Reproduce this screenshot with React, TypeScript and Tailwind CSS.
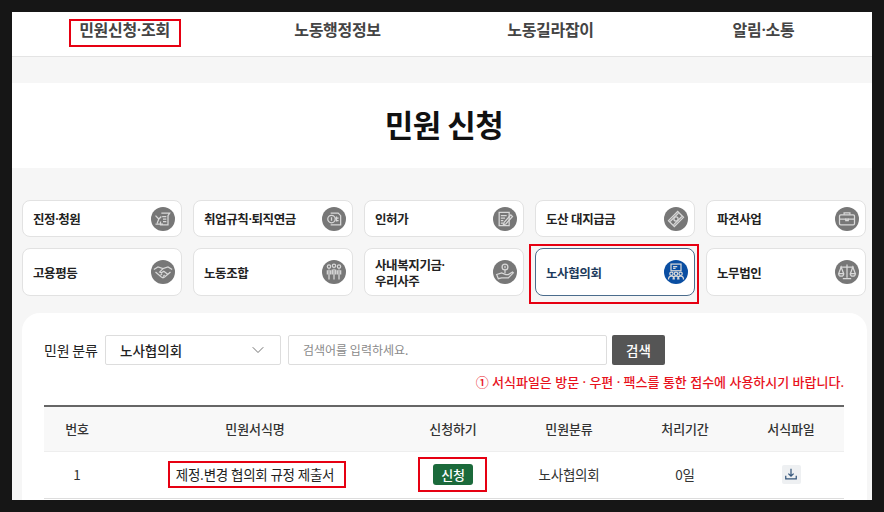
import { ChevronDown } from 'lucide-react';
import type { ReactNode } from 'react';

const font = { fontFamily: '"Noto Sans CJK KR", "Noto Sans", sans-serif' };

const icons: Record<string, ReactNode> = {
    petition: (
        <>
            <path d="M10 5h10l-2 3v11H9v-4" />
            <path d="M3 8l4 4 3-3M7 12l-2 5M3 18h9" />
            <path d="M11 9h5M12 12h4M12 15h4" />
        </>
    ),
    pay: (
        <>
            <path d="M8 5h9l3 3v11H8" />
            <circle cx="9" cy="12" r="4.5" />
            <path d="M9 10v4M15 9v6M17.5 11h-4M17.5 14h-3" />
        </>
    ),
    permit: (
        <>
            <path d="M5 4h12v16H5z" />
            <path d="M7 8h7M7 11h5M7 14h3M7 17h3" />
            <path d="M11 16l8-9 2 2-8 9-3 1z" />
        </>
    ),
    money: (
        <>
            <path d="M3 14L14 3l7 7-11 11z" />
            <path d="M5 15L15 5M9 19L19 9" />
            <circle cx="12" cy="12" r="2.5" />
        </>
    ),
    case: (
        <>
            <rect x="3" y="7" width="18" height="12" rx="1.5" />
            <path d="M8.5 7V4.5h7V7M3 12h18M10.5 11v3h3v-3" />
        </>
    ),
    hands: (
        <>
            <path d="M1 9l5-3 6 2 6-2 5 3" />
            <path d="M3 12l7 6 2 1 2-1 7-6" />
            <path d="M12 8l-4 4 2 1 3-2 5 4M9 16l2-2M12 17.5l2-2" />
        </>
    ),
    people: (
        <>
            <circle cx="6" cy="5.5" r="2" />
            <circle cx="12" cy="4.5" r="2" />
            <circle cx="18" cy="5.5" r="2" />
            <path d="M4 10v5M8 10v5M6 9v12M10 9v6M14 9v6M12 8v13M16 10v5M20 10v5M18 9v12" />
        </>
    ),
    welfare: (
        <>
            <circle cx="12" cy="6" r="3.5" />
            <path d="M12 4.5v3M12 9.5v4" />
            <path d="M2 15l6-2 5 2h3l5-3 1 1-6 6H8l-4 1z" />
        </>
    ),
    meeting: (
        <>
            <rect x="6" y="2.5" width="12" height="8" />
            <path d="M8.5 5.5h5M8.5 7.5h3" />
            <circle cx="6.5" cy="14" r="2" />
            <circle cx="12" cy="14" r="2" />
            <circle cx="17.5" cy="14" r="2" />
            <path d="M3 21c0-2.5 1-4 3.5-4s3.5 1.5 3.5 4M8.5 21c0-2.5 1-4 3.5-4s3.5 1.5 3.5 4M14 21c0-2.5 1-4 3.5-4s3.5 1.5 3.5 4" />
        </>
    ),
    scale: (
        <>
            <path d="M12 3v16M7 20h10M4 6h16" />
            <path d="M5 6l-3 8h6zM19 6l-3 8h6zM2 14c0 2 1.5 3 3 3s3-1 3-3M16 14c0 2 1.5 3 3 3s3-1 3-3" />
        </>
    ),
};

const cards = [
    { label: '진정·청원', icon: 'petition' },
    { label: '취업규칙·퇴직연금', icon: 'pay' },
    { label: '인허가', icon: 'permit' },
    { label: '도산 대지급금', icon: 'money' },
    { label: '파견사업', icon: 'case' },
    { label: '고용평등', icon: 'hands' },
    { label: '노동조합', icon: 'people' },
    { label: '사내복지기금·\n우리사주', icon: 'welfare' },
    { label: '노사협의회', icon: 'meeting', active: true },
    { label: '노무법인', icon: 'scale' },
];

const Card = ({ label, icon, active }: { label: string; icon: string; active?: boolean }) => (
    <div
        className={`relative flex items-center justify-between rounded-lg border bg-white pl-[10px] pr-[6px] ${
            active ? 'border-[#4a6c8c]' : 'border-[#e2e2e2]'
        }`}
    >
        <span
            className={`whitespace-pre-line pt-[3px] font-['Noto_Sans','Noto_Sans_CJK_KR',sans-serif] text-[12.5px] font-semibold leading-[16px] tracking-[-0.4px] ${
                active ? 'text-[#1d3a5c]' : 'text-[#222]'
            }`}
        >
            {label}
        </span>
        <span
            className={`flex h-6 w-6 shrink-0 items-center justify-center rounded-full ${
                active ? 'bg-[#0a4ea2]' : 'bg-[#777]'
            }`}
        >
            <svg viewBox="0 0 24 24" className="h-[20px] w-[20px]" fill="none" stroke="#d8d8d8" strokeWidth="1.5">
                {icons[icon]}
            </svg>
        </span>
        {active && <span className="absolute -bottom-[9px] -left-[7px] -right-[5px] -top-[5px] border-2 border-[#e60012]" />}
    </div>
);

export default function App() {
    return (
        <div style={font} className="h-[512px] w-[884px] overflow-hidden bg-[#161616] p-3">
            <div className="flex h-[488px] flex-col overflow-hidden bg-[#f6f6f6]">
                <nav className="grid h-[45px] shrink-0 grid-cols-4 border-b border-[#e4e4e4] bg-white pb-[6px] pl-[6px] pr-[2px] text-center font-['Noto_Sans','Noto_Sans_CJK_KR',sans-serif] text-[16px] font-semibold leading-[36px] tracking-[-0.3px] text-[#444]">
                    <div className="flex justify-center">
                        <span className="relative h-[36px]">
                            민원신청·조회
                            <span className="absolute -left-[10px] -right-[11px] bottom-[1px] top-[7px] border-2 border-[#e60012]" />
                        </span>
                    </div>
                    <div>노동행정정보</div>
                    <div>노동길라잡이</div>
                    <div>알림·소통</div>
                </nav>

                <div className="mt-[26px] flex h-[85px] shrink-0 items-center justify-center bg-white pb-[2px] pl-[4px] text-[31px] font-bold tracking-[-0.5px] text-[#111]">
                    민원 신청
                </div>

                <div className="grid grid-cols-[repeat(5,160px)] grid-rows-[37px_48px] gap-[11px] pl-[10px] pt-[32px]">
                    {cards.map((c) => (
                        <Card key={c.label} {...c} />
                    ))}
                </div>

                <div className="ml-[10px] mr-[5px] mt-[17px] flex-1 rounded-t-[18px] bg-white pl-[22px] pr-[23px] pt-[22px]">
                    <div className="flex h-[30px] items-center">
                        <span className="w-[61px] text-[14px] tracking-[-0.2px] text-[#222]">민원 분류</span>
                        <div className="flex h-full w-[176px] items-center justify-between rounded-[2px] border border-[#ddd] pl-[14px] pr-[12px] text-[13.5px] font-medium text-[#222]">
                            노사협의회
                            <ChevronDown className="h-[20px] w-[20px] text-[#666]" strokeWidth={1.1} />
                        </div>
                        <div className="ml-[7px] flex h-full w-[319px] items-center rounded-[2px] border border-[#ddd] pl-[14px] text-[12px] text-[#8a8a8a]">
                            검색어를 입력하세요.
                        </div>
                        <button className="ml-[5px] h-full w-[53px] rounded-[2px] bg-[#555] text-[13.5px] font-medium text-white">
                            검색
                        </button>
                    </div>

                    <p className="mt-[8px] text-right font-['Noto_Sans','Noto_Sans_CJK_KR',sans-serif] text-[13px] font-medium leading-[18px] tracking-[0px] text-[#e8121d]">
                        ① 서식파일은 방문 · 우편 · 팩스를 통한 접수에 사용하시기 바랍니다.
                    </p>

                    <div className="mt-[14px] border-t-2 border-[#666]">
                        <div className="grid h-[45px] grid-cols-[66px_290px_106px_126px_106px_106px] items-center border-b border-[#eee] bg-[#f8f8f8] text-center text-[13px] font-medium tracking-[-0.1px] text-[#333]">
                            <div>번호</div>
                            <div>민원서식명</div>
                            <div>신청하기</div>
                            <div>민원분류</div>
                            <div>처리기간</div>
                            <div>서식파일</div>
                        </div>
                        <div className="grid h-[47px] grid-cols-[66px_290px_106px_126px_106px_106px] items-center border-b border-[#ddd] pb-[2px] text-center text-[13.5px] tracking-[-0.2px] text-[#333]">
                            <div>1</div>
                            <div className="flex justify-center">
                                <span className="relative text-[#222]">
                                    제정.변경 협의회 규정 제출서
                                    <span className="absolute -bottom-[4px] -left-[8px] -right-[12px] -top-[3px] border-2 border-[#e60012]" />
                                </span>
                            </div>
                            <div className="flex justify-center">
                                <span className="relative rounded-[3px] bg-[#1b6a3b] px-[8px] text-[13px] font-medium leading-[21px] text-white">
                                    신청
                                    <span className="absolute -inset-y-[7px] -left-[15px] -right-[14px] border-2 border-[#e60012]" />
                                </span>
                            </div>
                            <div>노사협의회</div>
                            <div>0일</div>
                            <div className="flex justify-center">
                                <span className="flex h-[19px] w-[19px] items-center justify-center rounded-[2px] bg-[#eef0f2]">
                                    <svg viewBox="0 0 16 16" className="h-[14px] w-[14px]" fill="none" stroke="#34557a" strokeWidth="1.4">
                                        <path d="M8 2v8M5 7.5L8 10.5 11 7.5M2 10v3.5h12V10" />
                                    </svg>
                                </span>
                            </div>
                        </div>
                    </div>
                </div>
            </div>
        </div>
    );
}
